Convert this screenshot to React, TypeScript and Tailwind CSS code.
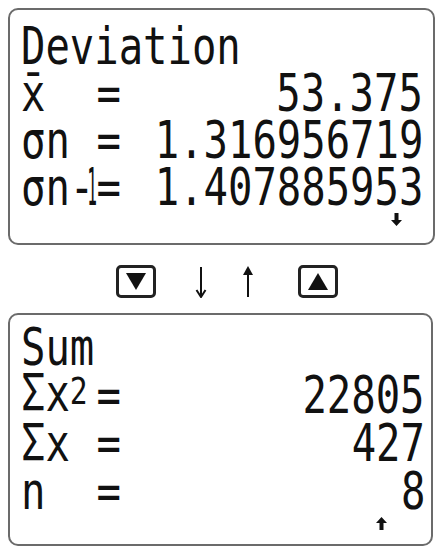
const lcd = "font-['DejaVu_Sans_Mono','Liberation_Mono',monospace] text-[52px] leading-[47px] text-[#111] whitespace-nowrap";

function Row({ label, value }: { label?: React.ReactNode; value?: string }) {
  return (
    <div className={`flex h-[47px] items-center ${lcd}`}>
      <div className="w-[78px] shrink-0 pl-[2px]">
        <span className="inline-block origin-left scale-x-[0.78]">{label}</span>
      </div>
      <div className="w-[24px] shrink-0 flex justify-center">
        <span className="inline-block scale-x-[0.78]">=</span>
      </div>
      <div className="flex-1 min-w-0 flex justify-end">
        <span className="inline-block shrink-0 origin-right scale-x-[0.78]">{value}</span>
      </div>
    </div>
  );
}

function Title({ text }: { text: string }) {
  return (
    <div className={`flex h-[47px] items-center pl-[2px] ${lcd}`}>
      <span className="inline-block origin-left scale-x-[0.78]">{text}</span>
    </div>
  );
}

function SmallArrow({ up }: { up?: boolean }) {
  return (
    <svg width="11" height="13" viewBox="0 0 11 13" className={up ? '' : 'rotate-180'}>
      <path d="M5.5 0 L11 6 H7.5 V13 H3.5 V6 H0 Z" fill="#111" />
    </svg>
  );
}

function KeyBox({ up }: { up?: boolean }) {
  return (
    <div className="w-[40px] h-[33px] border-[3px] border-[#222] rounded-[5px] flex items-center justify-center">
      <svg width="20" height="17" viewBox="0 0 20 17">
        {up ? <path d="M10 0 L20 17 H0 Z" fill="#111" /> : <path d="M0 0 H20 L10 17 Z" fill="#111" />}
      </svg>
    </div>
  );
}

export default function App() {
  return (
    <div className="w-[440px] h-[548px] bg-white overflow-hidden pt-[8px] pl-[8px]">
      {/* top screen */}
      <div className="w-[427px] h-[237px] border-2 border-[#6b6b6b] rounded-[10px] pt-[13px] pl-[9px] pr-[10px]">
        <Title text="Deviation" />
        <Row label={'x\u0304'} value="53.375" />
        <Row label="σn" value="1.316956719" />
        <Row
          label={
            <>
              σn<span className="tracking-[-9px]">-</span>
              <span className="inline-block origin-left scale-x-[0.4]">1</span>
            </>
          }
          value="1.407885953"
        />
        <div className="flex justify-end pr-[21px] mt-[2px]">
          <SmallArrow />
        </div>
      </div>

      {/* keys */}
      <div className="flex items-center h-[33px] mt-[20px] mb-[15px] pl-[108px]">
        <KeyBox />
        <svg width="12" height="32" viewBox="0 0 12 32" className="ml-[39px]">
          <path d="M6 1 V30" stroke="#111" strokeWidth="2" />
          <path d="M1.5 24 L6 31 L10.5 24" stroke="#111" strokeWidth="2" fill="none" />
        </svg>
        <svg width="12" height="32" viewBox="0 0 12 32" className="ml-[35px]">
          <path d="M6 2 V31" stroke="#111" strokeWidth="2" />
          <path d="M6 0 L11 9 H1 Z" fill="#111" />
        </svg>
        <div className="ml-[44px]">
          <KeyBox up />
        </div>
      </div>

      {/* bottom screen */}
      <div className="w-[425px] h-[233px] border-2 border-[#6b6b6b] rounded-[10px] pt-[9px] pl-[9px] pr-[6px]">
        <div className="flex flex-col gap-[1px]">
          <Title text="Sum" />
          <Row
            label={
              <>
                Σx<span className="relative -top-[7px] text-[38px]">2</span>
              </>
            }
            value="22805"
          />
          <Row label="Σx" value="427" />
          <Row label="n" value="8" />
        </div>
        <div className="flex justify-end pr-[38px] mt-[2px]">
          <SmallArrow up />
        </div>
      </div>
    </div>
  );
}
